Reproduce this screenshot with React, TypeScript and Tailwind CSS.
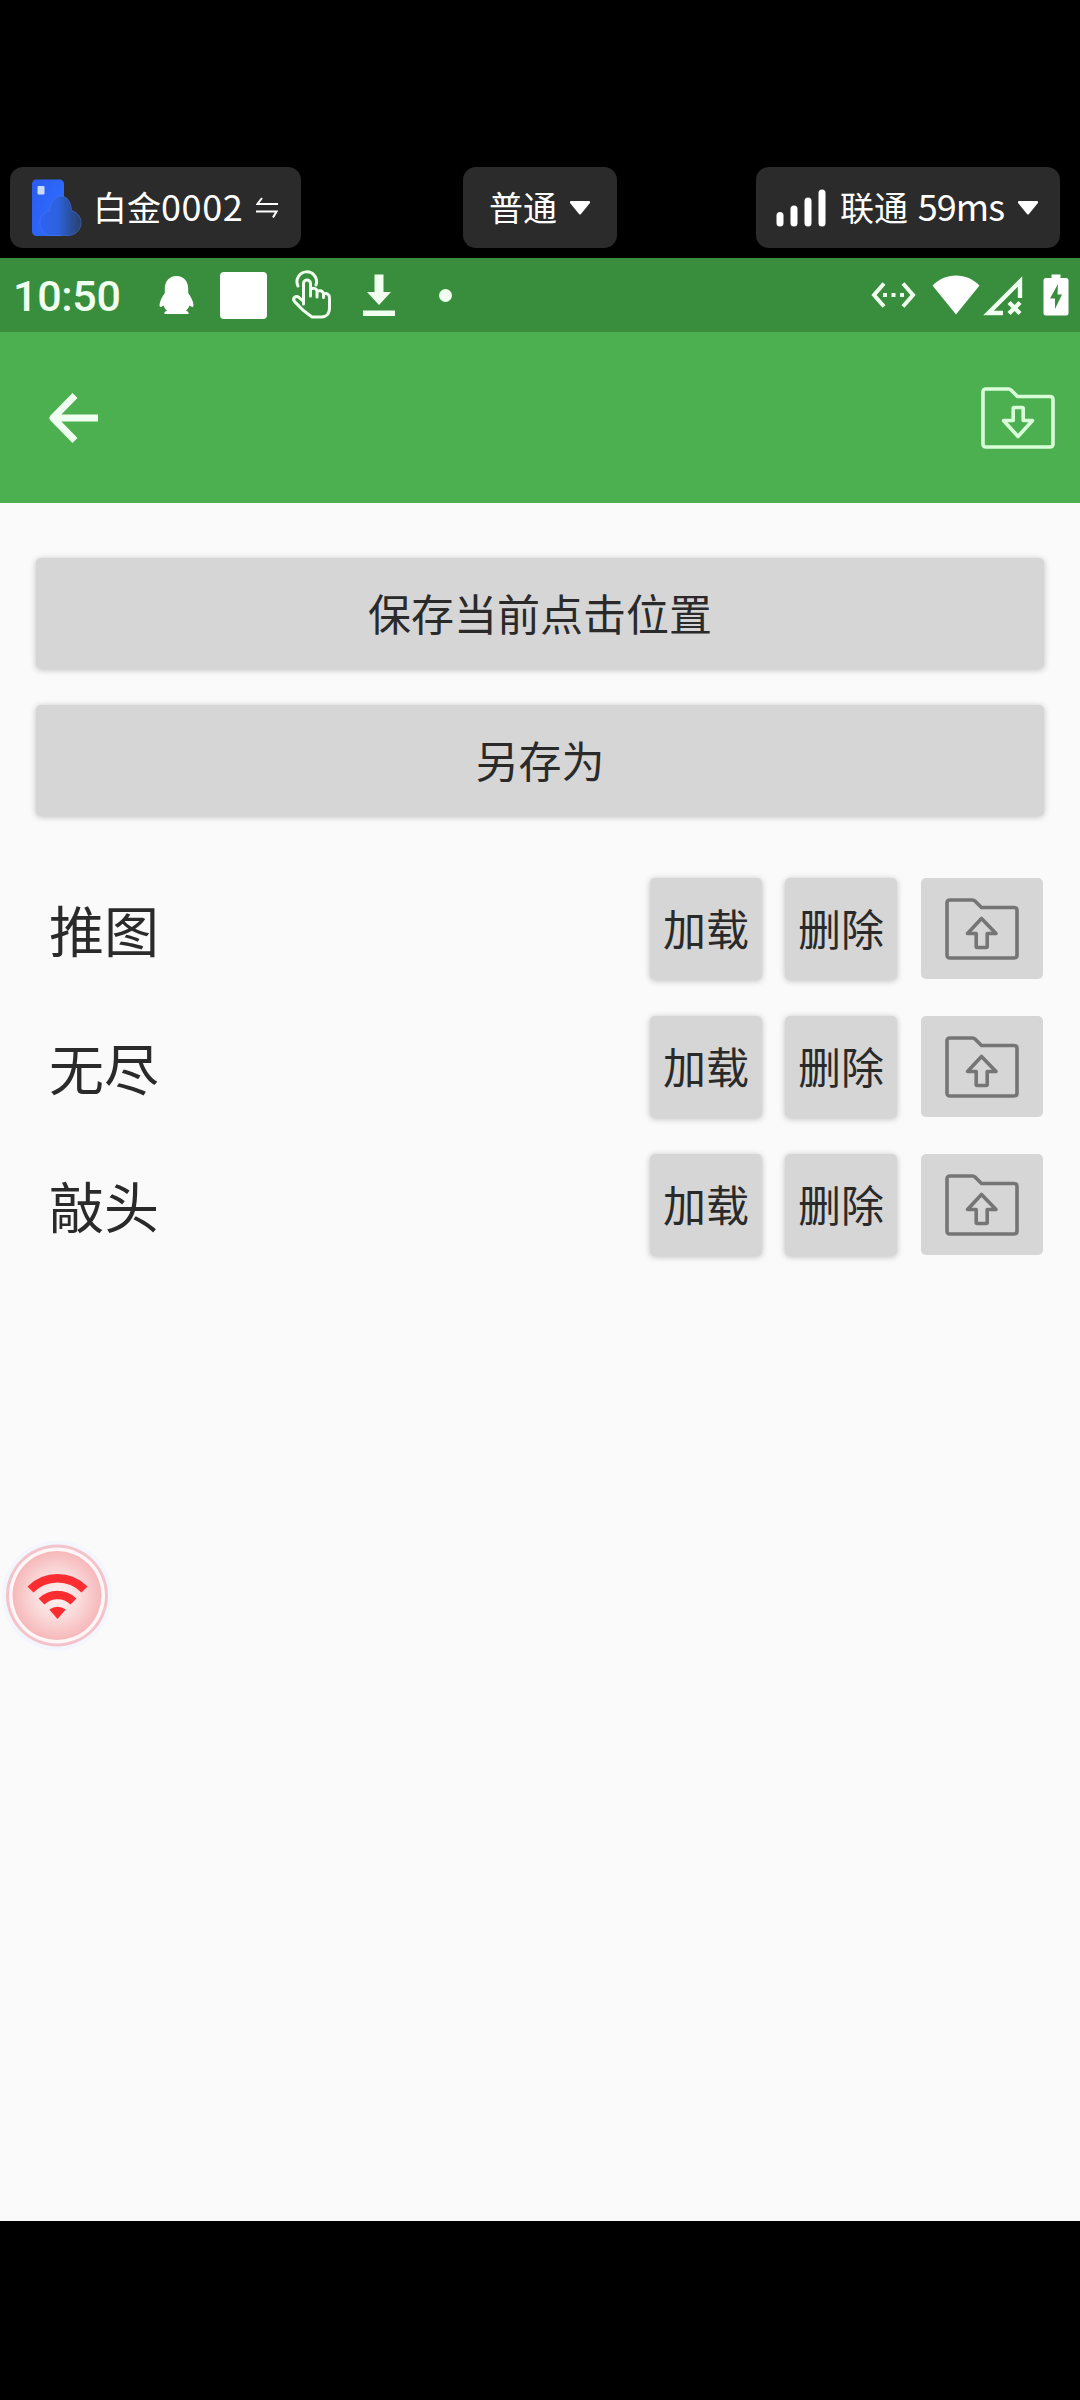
import type { ReactNode } from 'react';

const slots = ['推图', '无尽', '敲头'];

function Caret() {
  return (
    <svg className="h-4 w-[22px] shrink-0" viewBox="0 0 22 16" fill="#fff">
      <path d="M2 1h18a1.2 1.2 0 0 1 .9 1.9L12 14a1.3 1.3 0 0 1-2 0L1.100 2.900A1.200 1.200 0 0 1 2 1z" />
    </svg>
  );
}

function CloudPhone() {
  return (
    <svg className="h-[58px] w-[50px] shrink-0" viewBox="0 0 50 58">
      <defs>
        <linearGradient id="phone" x1="0" y1="0" x2="1" y2="0.6">
          <stop offset="0" stopColor="#2a5cf0" />
          <stop offset="1" stopColor="#2f6dff" />
        </linearGradient>
        <linearGradient id="cloud" x1="0" y1="0" x2="1" y2="0">
          <stop offset="0" stopColor="#2f62f5" />
          <stop offset="0.45" stopColor="#2c62dc" />
          <stop offset="1" stopColor="#28406a" />
        </linearGradient>
      </defs>
      <rect x="0" y="0.500" width="32" height="56.500" rx="4.500" fill="url(#phone)" />
      <rect x="5.500" y="7" width="7" height="8.500" rx="1" fill="#c9dcff" />
      <path
        d="M17.500 56.500C11 55 7 48 8 41.500c1-5.500 5-9 9.500-9.500C18.500 23 23 17 29 17s10 5.500 10.500 14.500C45 33 49 38 49 43.500c0 8-6 13-13 13z"
        fill="url(#cloud)"
        stroke="#4a7af0"
        strokeOpacity="0.5"
      />
    </svg>
  );
}

function Folder({ up = false, color, className }: { up?: boolean; color: string; className?: string }) {
  return (
    <svg
      className={className}
      width="74"
      height="62"
      viewBox="0 0 74 62"
      fill="none"
      stroke={color}
      strokeWidth="3.600"
      strokeLinejoin="round"
    >
      <path d="M5 2h22.500q1.500 0 2.500 1l6.500 6.500H69q3 0 3 3V57q0 3-3 3H5q-3 0-3-3V5q0-3 3-3z" />
      {up ? (
        <path d="M36.500 20.500 51 35.500H42.200V48.500q0 1-1 1h-9q-1 0-1-1V35.500H22.500z" />
      ) : (
        <path d="M42.200 33.500V21.500q0-1-1-1h-8q-1 0-1 1V33.500H22.500L37 49.500 51.500 33.500z" />
      )}
    </svg>
  );
}

function Pill({ className, children }: { className: string; children: ReactNode }) {
  return (
    <div className={`flex h-[81px] items-center rounded-[13px] bg-[#2b2b2b] text-[34px] leading-[40px] text-white ${className}`}>
      {children}
    </div>
  );
}

function TopBar() {
  return (
    <div className="flex h-[258px] items-end bg-black pr-5 pb-[10px] pl-[10px]">
      <Pill className="w-[291px] pl-[22px]">
        <CloudPhone />
        <span className="mb-[3px] ml-[11px] whitespace-nowrap">
          白金<span className="text-[36px] tracking-[0.6px]">0002</span>
        </span>
        <svg className="ml-[13px] h-[22px] w-[22px]" viewBox="0 0 22 22" fill="none" stroke="#fff" strokeWidth="2">
          <path d="M22 7H1.500L6 1M0 14.500h20.500L17 20.500" />
        </svg>
      </Pill>
      <Pill className="ml-[162px] w-[154px] pl-[26px]">
        <span className="mb-px">普通</span>
        <span className="ml-[12px]"><Caret /></span>
      </Pill>
      <Pill className="ml-auto w-[304px] pl-5">
        <svg className="h-[38px] w-[51px] shrink-0" viewBox="0 0 51 38" fill="#fff">
          <rect x="0.500" y="23" width="7" height="14.500" rx="3.500" />
          <rect x="14.500" y="16.500" width="7" height="21" rx="3.500" />
          <rect x="28.500" y="8.500" width="7" height="29" rx="3.500" />
          <rect x="42.500" y="0.500" width="7" height="37" rx="3.500" />
        </svg>
        <span className="mb-[3px] ml-[13px] whitespace-nowrap">
          联通 <span className="ml-[2px] text-[36px] tracking-[-0.9px]">59ms</span>
        </span>
        <span className="ml-[13px]"><Caret /></span>
      </Pill>
    </div>
  );
}

function StatusBar() {
  return (
    <div className="flex h-[74px] items-center bg-[#388e3c] text-[#f0fff0]">
      <span className="mt-[3px] ml-[13px] w-[110px] font-[Roboto] text-[43px] leading-none font-medium tracking-[-0.3px]">10:50</span>
      {/* penguin */}
      <svg className="ml-9 h-[50px] w-[35px]" viewBox="0 0 35 50" fill="#fff">
        <path d="M17.500 6C10 6 5.800 11.500 5.800 19v4C3 27 .8 31 .5 35c0 2.500 1.500 2.500 4 .500 1 2.500 2 4 3.500 5.300C6 41.500 5 42.500 5.500 44h24c.5-1.500-.5-2.500-2.500-3.200 1.500-1.300 2.500-2.800 3.500-5.300 2.500 2 4 2 4-.500-.300-4-2.500-8-5.300-12v-4C29.200 11.500 25 6 17.500 6z" />
      </svg>
      <div className="ml-[26px] h-[47px] w-[47px] rounded-[4px] bg-white" />
      {/* tap gesture */}
      <svg
        className="ml-[25px] h-[50px] w-[40px]"
        viewBox="0 0 40 50"
        fill="none"
        stroke="currentColor"
        strokeWidth="3"
        strokeLinecap="round"
        strokeLinejoin="round"
      >
        <path d="M6 16A9.800 9.800 0 1 1 24 15" />
        <path d="M11.500 34V13.500a3.500 3.500 0 0 1 7 0V26M18.500 19.500c2-2 6-1.500 6.500 1.500V27M25 21.500c2-1.500 5.500-1 6.500 2v4M31.500 24c3-1.200 6 0 6 4V38c0 6-3.500 9-8 9H20C14 43 8 38 2.500 31.500 0 28 4 25 7 27.500l4.500 4" />
      </svg>
      <svg className="ml-[31px] h-[50px] w-[32px]" viewBox="0 0 32 50" fill="currentColor">
        <path d="M11.500 4.500h9V22H28L16 35 4 22h7.500zM0 40.500h32V46H0z" />
      </svg>
      <div className="ml-[44px] h-[13px] w-[13px] rounded-full bg-current" />
      {/* ethernet */}
      <svg className="ml-auto h-[50px] w-[45px]" viewBox="0 0 45 50" fill="none" stroke="currentColor" strokeWidth="4">
        <path d="M13 13.500 3 25l10 11.500M32 13.500 42 25 32 36.500" />
        <path d="M12 23h4v4h-4zM20.500 23h4v4h-4zM29 23h4v4h-4z" fill="currentColor" stroke="none" />
      </svg>
      <svg className="ml-4 h-[50px] w-[48px]" viewBox="0 0 48 50" fill="#fff">
        <path d="M24 44.500.500 15.500C7 9 15 5.500 24 5.500S41 9 47.500 15.500z" />
      </svg>
      {/* cellular, no service */}
      <svg className="ml-[3px] h-[50px] w-[41px]" viewBox="0 0 41 50" fill="none" stroke="currentColor" strokeWidth="4.400">
        <path d="M20 43H5.500L37 11.500V28" />
        <path d="m26 32.500 11 11M37 32.500l-11 11" />
      </svg>
      <svg className="mr-[11px] ml-[19px] h-[50px] w-[26px]" viewBox="0 0 26 50">
        <path
          d="M8.500 4.500h9V8H23q2.500 0 2.500 2.500v32.500q0 2.500-2.500 2.500H3q-2.500 0-2.500-2.500V10.500q0-2.500 2.500-2.500h5.500z"
          fill="#fff"
        />
        <path d="M15 14 7 28.500h5V39l7-14.500h-4.500z" fill="#388e3c" />
      </svg>
    </div>
  );
}

function AppBar() {
  return (
    <div className="flex h-[171px] items-center justify-between bg-[#4caf50] pr-[25px] pl-[49px]">
      <svg
        className="h-[50px] w-[49px]"
        viewBox="0 0 49 50"
        fill="none"
        stroke="#f0fff0"
        strokeWidth="7"
        strokeLinejoin="round"
      >
        <path d="M26 2.500 4 25 26 47.500M5 25h44" />
      </svg>
      <Folder color="#d9ffd9" className="mt-px" />
    </div>
  );
}

const raised = 'flex items-center justify-center rounded-[5px] bg-[#d6d6d6] pb-[3px] text-[43px] leading-none shadow-[0_1px_6px_rgba(0,0,0,0.24)]';

export default function App() {
  return (
    <div className="relative flex h-[2400px] w-[1080px] flex-col overflow-hidden bg-black font-['Noto_Sans_CJK_SC',sans-serif] text-[#2a2a2a]">
      <TopBar />
      <StatusBar />
      <AppBar />

      <div className="h-[1718px] bg-[#fafafa] px-9 pt-[55px]">
        <button className={`${raised} h-[111px] w-full`}>保存当前点击位置</button>
        <button className={`${raised} mt-9 h-[111px] w-full`}>另存为</button>

        <div className="mt-[62px] flex flex-col gap-[35px]">
          {slots.map((name) => (
            <div key={name} className="flex h-[103px] items-start">
              <span className="ml-[13px] flex-1 text-[55px] leading-[100px]">{name}</span>
              <button className={`${raised} h-[102px] w-[112px]`}>加载</button>
              <button className={`${raised} ml-[23px] h-[102px] w-[112px]`}>删除</button>
              <button className="mr-px ml-[24px] flex h-[101px] w-[122px] items-center justify-center rounded-[5px] bg-[#d6d6d6]">
                <Folder up color="#757575" />
              </button>
            </div>
          ))}
        </div>
      </div>

      {/* floating network button */}
      <svg className="absolute top-[1530px] left-0 h-[130px] w-[120px]" viewBox="0 0 120 130">
        <defs>
          <radialGradient id="glow">
            <stop offset="0" stopColor="#fdf3f3" />
            <stop offset="0.5" stopColor="#fbdcdc" />
            <stop offset="1" stopColor="#f6b8ba" />
          </radialGradient>
        </defs>
        <circle cx="57" cy="65.500" r="55" fill="#f4f6fd" />
        <circle cx="57" cy="65.500" r="51" fill="#f4c3ca" />
        <circle cx="57" cy="65.500" r="48" fill="#fff6f7" />
        <circle cx="57" cy="65.500" r="44.500" fill="url(#glow)" />
        <g fill="none" stroke="#fc2d30" strokeWidth="8.500">
          <path d="M30.500 59.500a38 38 0 0 1 54 0" />
          <path d="M41.500 71.500a23 23 0 0 1 32 0" />
        </g>
        <path d="M57.500 89 49.300 79.500q8.200-5.500 16.400 0z" fill="#fc2d30" />
      </svg>
    </div>
  );
}
